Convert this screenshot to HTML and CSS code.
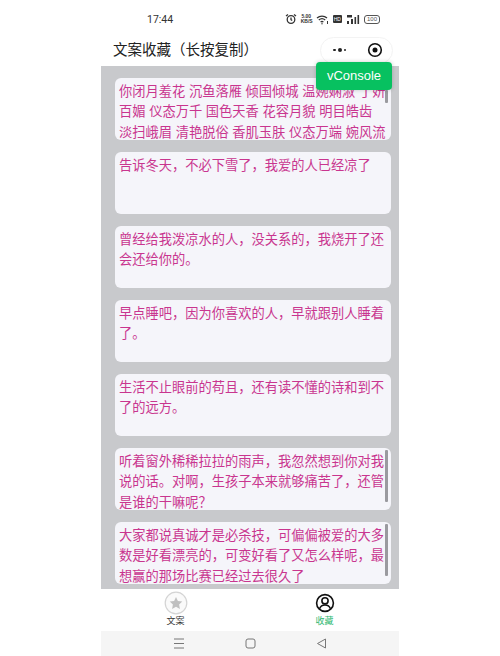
FILE: index.html
```html
<!DOCTYPE html>
<html lang="zh-CN">
<head>
  <meta charset="UTF-8" />
  <title>文案收藏</title>
  <link rel="stylesheet" href="styles.css">
</head>
<body>
  <div class="phone">
    <div class="status-bar">
      <span class="time">17:44</span>
      <div class="status-icons">
        <svg width="12" height="12" viewBox="0 0 12 12" fill="none" stroke="#333" stroke-width="1.3"><circle cx="6" cy="6.5" r="3.8"/><path d="M6 4.5v2.2l1.2.8M1 3l2-1.6M11 3L9 1.4"/></svg>
        <span class="speed">5.00<br>KB/S</span>
        <svg width="13" height="11" viewBox="0 0 13 11" fill="none" stroke="#333" stroke-width="1.3"><path d="M1 4a7.5 7.5 0 0 1 10 0M2.8 6a5 5 0 0 1 6.4 0M4.6 8a2.4 2.4 0 0 1 2.8 0"/><circle cx="6" cy="9.8" r=".7" fill="#333" stroke="none"/><path d="M11.5 7v3" stroke-width="1"/></svg>
        <span class="hd">HD</span>
        <svg width="14" height="11" viewBox="0 0 14 11" fill="#333"><rect x="1" y="7" width="2" height="3"/><rect x="5" y="5" width="2" height="5"/><rect x="8.500" y="3" width="1.600" height="7"/><rect x="11.500" y="1" width="1.600" height="9"/><rect x="1" y="1" width="5" height="2.500"/></svg>
        <span class="battery">100</span>
      </div>
    </div>

    <div class="nav-bar">
      <span class="nav-title">文案收藏（长按复制）</span>
      <div class="capsule">
        <span class="dots"><i></i><i class="big"></i><i></i></span>
        <svg width="16" height="16" viewBox="0 0 16 16"><circle cx="8" cy="8" r="6.3" fill="none" stroke="#111" stroke-width="1.6"/><circle cx="8" cy="8" r="2.500" fill="#111"/></svg>
      </div>
    </div>
    <div class="vconsole">vConsole</div>

    <div class="list">
      <div class="card"><p>你闭月羞花 沉鱼落雁 倾国倾城 温婉娴淑 丁妍<br>百媚 仪态万千 国色天香 花容月貌 明目皓齿<br>淡扫峨眉 清艳脱俗 香肌玉肤 仪态万端 婉风流</p><i class="thumb thumb-short"></i></div>
      <div class="card"><p>告诉冬天，不必下雪了，我爱的人已经凉了</p></div>
      <div class="card"><p>曾经给我泼凉水的人，没关系的，我烧开了还会还给你的。</p></div>
      <div class="card"><p>早点睡吧，因为你喜欢的人，早就跟别人睡着了。</p></div>
      <div class="card"><p>生活不止眼前的苟且，还有读不懂的诗和到不了的远方。</p></div>
      <div class="card"><p>听着窗外稀稀拉拉的雨声，我忽然想到你对我说的话。对啊，生孩子本来就够痛苦了，还管是谁的干嘛呢？</p><i class="thumb"></i></div>
      <div class="card"><p>大家都说真诚才是必杀技，可偏偏被爱的大多数是好看漂亮的，可变好看了又怎么样呢，最想赢的那场比赛已经过去很久了</p><i class="thumb"></i></div>
    </div>

    <div class="tab-bar">
      <div class="tab">
        <svg width="24" height="24" viewBox="0 0 24 24"><circle cx="12" cy="12" r="10.800" fill="#fafafa" stroke="#d4d4d4" stroke-width="1.200"/><path d="M12 6l1.900 4 4.400.6-3.200 3 .8 4.300-3.900-2.100-3.900 2.100.8-4.300-3.200-3 4.400-.6z" fill="#c0c0c0"/></svg>
        <span>文案</span>
      </div>
      <div class="tab tab-active">
        <svg width="20" height="20" viewBox="0 0 20 20" fill="none" stroke="#111" stroke-width="1.600"><circle cx="10" cy="10" r="8.400"/><circle cx="10" cy="7.800" r="3.100"/><path d="M4.500 15.800c1-2.600 3-3.800 5.500-3.800s4.500 1.200 5.500 3.800"/></svg>
        <span>收藏</span>
      </div>
    </div>

    <div class="sys-nav">
      <svg width="12" height="11" viewBox="0 0 12 11" stroke="#777" stroke-width="1"><path d="M1 1h10M1 5.500h10M1 10h10"/></svg>
      <svg width="11" height="11" viewBox="0 0 11 11" fill="none" stroke="#777" stroke-width="1"><rect x="1" y="1" width="9" height="9" rx="2"/></svg>
      <svg width="11" height="11" viewBox="0 0 11 11" fill="none" stroke="#777" stroke-width="1"><path d="M9.500 1v9L1.500 5.500z"/></svg>
    </div>
  </div>
</body>
</html>
```

FILE: styles.css
```css
* {
  box-sizing: border-box;
}
body {
  margin: 0;
  background: #fff;
  font-family: "Liberation Sans", "Noto Sans CJK SC", sans-serif;
}
.phone {
  position: relative;
  width: 298px;
  height: 656px;
  margin-left: 101px;
  background: #fff;
  overflow: hidden;
}
.status-bar {
  display: flex;
  justify-content: space-between;
  align-items: center;
  height: 34px;
  padding: 4px 19px 0 46px;
  color: #333;
}
.time {
  font-family: "Roboto", sans-serif;
  font-size: 10.5px;
}
.status-icons {
  display: flex;
  align-items: center;
  gap: 4px;
}
.speed {
  font-size: 5px;
  line-height: 5px;
  font-weight: bold;
  text-align: center;
  width: 11px;
}
.hd {
  background: #333;
  color: #fff;
  font-size: 5px;
  line-height: 8px;
  padding: 0 1px;
  border-radius: 1px;
}
.battery {
  border: 1px solid #555;
  border-radius: 3px;
  color: #555;
  font-size: 6px;
  line-height: 7px;
  padding: 0 2px;
}
.nav-bar {
  display: flex;
  justify-content: space-between;
  align-items: center;
  height: 32px;
  padding: 0 6px 0 12px;
}
.nav-title {
  padding-bottom: 4px;
  font-size: 14.500px;
  color: #222;
}
.capsule {
  display: flex;
  justify-content: space-between;
  align-items: center;
  width: 73px;
  height: 27px;
  padding: 0 9px 0 12px;
  border: 1px solid #f3f3f3;
  border-radius: 14px;
}
.dots {
  display: flex;
  align-items: center;
  gap: 2px;
}
.dots i {
  width: 2.500px;
  height: 2.500px;
  border-radius: 50%;
  background: #222;
}
.dots i.big {
  width: 4px;
  height: 4px;
}
.vconsole {
  position: absolute;
  z-index: 2;
  top: 62px;
  left: 215px;
  width: 76px;
  height: 28px;
  background: #07c160;
  border-radius: 4px;
  color: #fff;
  font-size: 13px;
  line-height: 28px;
  text-align: center;
  box-shadow: 0 0 4px rgba(0,0,0,0.2);
}
.list {
  display: flex;
  flex-direction: column;
  gap: 12px;
  height: 523px;
  padding: 12px 8px 0 14px;
  background: #c8c9cc;
  overflow: hidden;
}
.card {
  position: relative;
  flex: none;
  height: 62px;
  padding: 4px 2px 0 4px;
  background: #f5f5fa;
  border-radius: 6px;
  overflow: hidden;
}
.card p {
  margin: 0;
  font-size: 13.250px;
  line-height: 20.300px;
  color: #c9358f;
}
.thumb {
  position: absolute;
  top: 2px;
  right: 3px;
  width: 3px;
  height: 52px;
  background: #9a9a9f;
  border-radius: 1px;
}
.thumb-short {
  top: 12px;
  height: 13px;
}
.tab-bar {
  display: flex;
  height: 42px;
  background: #fff;
}
.tab {
  flex: 1;
  display: flex;
  flex-direction: column;
  align-items: center;
  justify-content: flex-end;
  padding-bottom: 4px;
  font-size: 9px;
  line-height: 12px;
  color: #333;
}
.tab-active {
  color: #2fb872;
}
.tab-active svg {
  margin-bottom: 2px;
}
.sys-nav {
  display: flex;
  justify-content: space-between;
  align-items: center;
  height: 25px;
  padding: 0 72px 0 72px;
  background: #f5f5f5;
}
```
